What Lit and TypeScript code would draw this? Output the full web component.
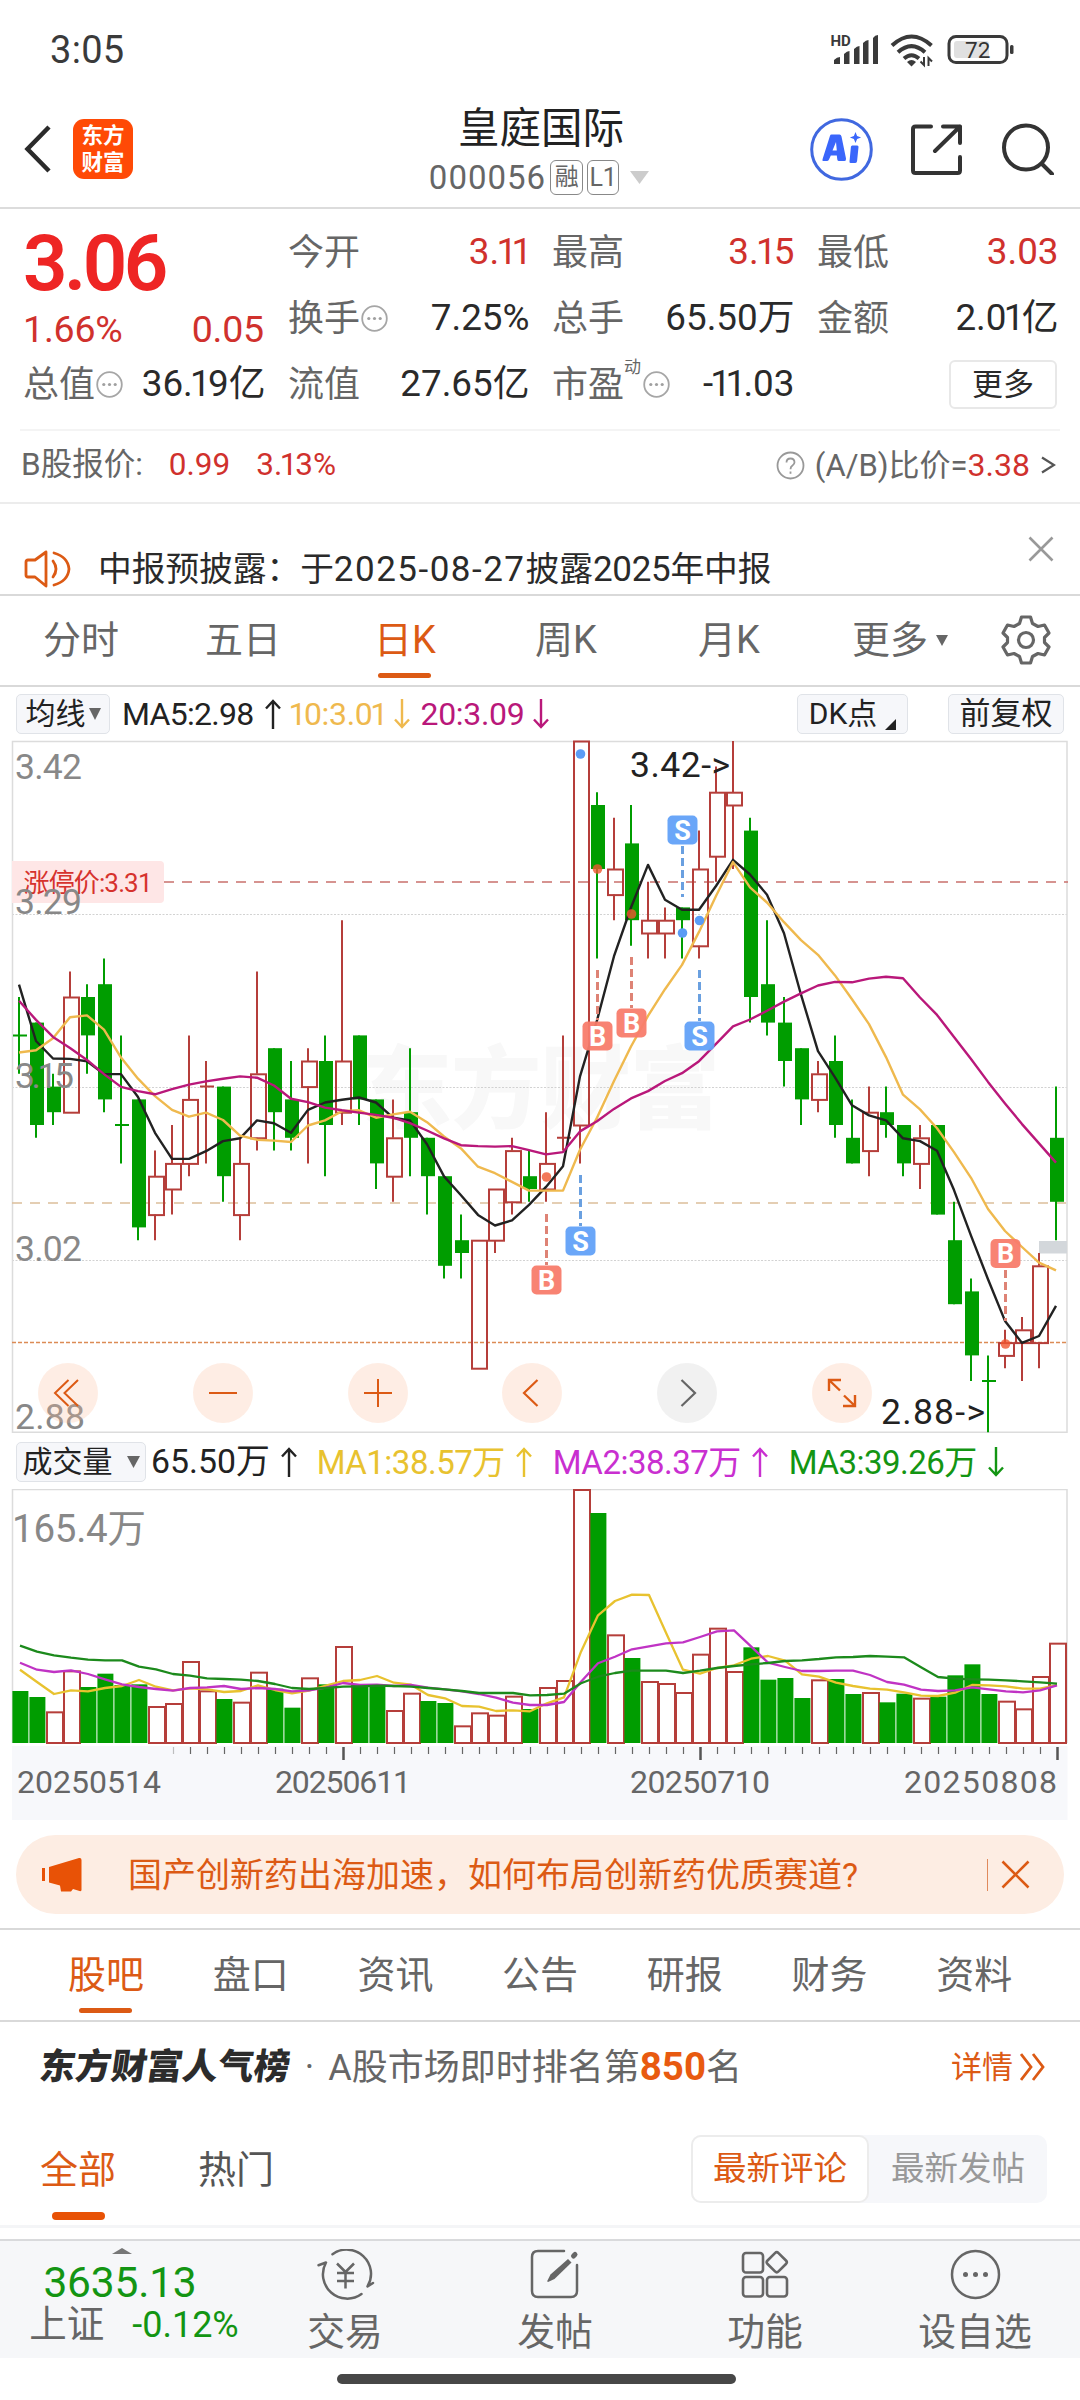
import { LitElement, html, svg, css, nothing } from "lit";
import { customElement, property } from "lit/decorators.js";

type Candle = [string, number, number, number, number];

const UP = "#b53e3a";
const DOWN = "#009d00";
const STEP = 17;

/* colour, high, body top, body bottom, low: ticks of 0.01 below 3.42 */
const CANDLES: Candle[] = [
  ["g", 20, 23, 23, 26], ["g", 22, 22, 30, 31], ["g", 26, 27, 29, 30], ["r", 18, 20, 29, 29],
  ["g", 19, 20, 23, 26], ["g", 17, 19, 28, 29], ["g", 23, 30, 30, 33], ["g", 28, 28, 38, 39],
  ["r", 32, 34, 37, 39], ["r", 30, 33, 35, 37], ["r", 23, 28, 33, 34], ["r", 25, 27, 27, 33],
  ["g", 27, 27, 34, 36], ["r", 31, 33, 37, 39], ["r", 18, 26, 31, 32], ["g", 24, 24, 29, 32],
  ["g", 25, 28, 31, 32], ["r", 24, 25, 27, 33], ["g", 23, 25, 30, 34], ["r", 14, 25, 29, 30],
  ["g", 23, 23, 28, 30], ["g", 28, 28, 33, 35], ["r", 28, 31, 34, 36], ["g", 24, 29, 31, 34],
  ["g", 31, 31, 34, 37], ["g", 34, 34, 41, 42], ["g", 37, 39, 40, 42], ["r", 39, 39, 49, 49],
  ["r", 35, 35, 39, 40], ["r", 31, 32, 36, 37], ["g", 32, 34, 35, 36], ["r", 29, 33, 35, 36],
  ["r", 23, 31, 31, 32], ["r", 0, 0, 30, 33], ["g", 4, 5, 10, 17], ["r", 6, 10, 12, 14],
  ["g", 5, 8, 14, 16], ["r", 11, 14, 15, 17], ["r", 13, 14, 15, 17], ["g", 13, 13, 14, 17],
  ["r", 7, 10, 16, 17], ["r", 2, 4, 9, 11], ["r", 0, 4, 5, 10], ["g", 6, 7, 20, 22],
  ["g", 14, 19, 22, 23], ["g", 20, 22, 25, 27], ["g", 24, 24, 28, 30], ["r", 25, 26, 28, 29],
  ["g", 23, 25, 30, 31], ["g", 28, 31, 33, 33], ["r", 27, 29, 32, 34], ["g", 27, 29, 30, 31],
  ["g", 30, 30, 33, 34], ["r", 30, 31, 33, 35], ["g", 30, 30, 37, 37], ["g", 36, 39, 44, 44],
  ["g", 42, 43, 48, 50], ["g", 48, 50, 50, 54], ["r", 46, 47, 48, 49], ["r", 45, 46, 47, 50],
  ["r", 40, 41, 47, 49], ["g", 27, 31, 36, 39],
];

/* moving averages, 27.9 units to a tick */
const MA5 = [555, 678, 716, 717, 722, 750, 750, 800, 878, 935, 935, 918, 896, 890, 851, 857, 878, 828, 812, 806, 801, 812, 845, 851, 903, 973, 1014, 1057, 1080, 1069, 1035, 996, 951, 755, 633, 493, 387, 294, 370, 392, 392, 340, 283, 315, 359, 443, 577, 700, 757, 818, 840, 851, 890, 896, 917, 1003, 1102, 1197, 1288, 1336, 1321, 1255];
const MA10 = [703, 698, 672, 626, 622, 653, 714, 760, 798, 828, 843, 834, 850, 884, 893, 895, 898, 862, 851, 831, 829, 845, 838, 832, 855, 886, 912, 952, 966, 985, 1004, 1004, 1004, 915, 845, 765, 690, 623, 565, 512, 440, 362, 288, 343, 376, 419, 458, 490, 535, 587, 641, 713, 795, 827, 868, 920, 976, 1044, 1092, 1127, 1161, 1178];
const MA20 = [590, 632, 669, 693, 719, 750, 778, 787, 794, 783, 773, 766, 760, 755, 758, 775, 804, 811, 823, 829, 834, 839, 845, 857, 873, 890, 905, 907, 908, 907, 916, 925, 920, 875, 853, 826, 803, 787, 765, 748, 722, 684, 646, 631, 612, 592, 574, 557, 549, 550, 542, 538, 541, 583, 621, 669, 717, 767, 814, 859, 901, 943];

/* volume bars and their averages, measured down from the panel in thirds of a pixel */
const VOL: [string, number][] = [
  ["g", 783], ["g", 801], ["r", 844], ["r", 721], ["g", 771], ["g", 731], ["g", 765], ["g", 763], ["r", 828], ["r", 819],
  ["r", 693], ["r", 781], ["g", 807], ["r", 815], ["r", 725], ["g", 776], ["g", 833], ["r", 742], ["g", 763], ["r", 648],
  ["g", 765], ["g", 766], ["r", 840], ["r", 788], ["g", 813], ["g", 819], ["r", 886], ["r", 847], ["r", 854], ["r", 797],
  ["g", 837], ["r", 771], ["r", 750], ["r", 177], ["g", 249], ["r", 613], ["g", 684], ["r", 753], ["r", 759], ["r", 786],
  ["r", 671], ["r", 593], ["r", 723], ["g", 652], ["g", 749], ["g", 744], ["g", 804], ["r", 748], ["g", 747], ["g", 792],
  ["r", 786], ["g", 817], ["g", 791], ["r", 803], ["g", 800], ["g", 736], ["g", 703], ["g", 792], ["r", 812], ["r", 835],
  ["r", 738], ["r", 638],
];
const VMA1 = [719, 756, 792, 781, 784, 774, 768, 750, 770, 781, 775, 778, 786, 783, 766, 780, 790, 782, 767, 753, 750, 738, 758, 764, 795, 805, 828, 830, 843, 841, 844, 820, 802, 665, 556, 513, 494, 495, 608, 719, 731, 714, 706, 686, 678, 692, 733, 740, 758, 768, 776, 779, 787, 797, 798, 788, 765, 766, 769, 776, 776, 765];
const VMA2 = [698, 719, 726, 721, 732, 748, 763, 771, 777, 782, 774, 772, 768, 777, 774, 777, 784, 781, 773, 759, 765, 764, 768, 765, 773, 778, 784, 792, 803, 818, 825, 825, 816, 755, 700, 680, 658, 649, 640, 637, 621, 604, 601, 649, 698, 711, 723, 723, 722, 722, 735, 756, 764, 779, 783, 781, 772, 778, 784, 787, 781, 766];
const VMA3 = [647, 665, 676, 683, 689, 691, 691, 710, 718, 732, 737, 745, 747, 749, 753, 762, 774, 777, 774, 770, 769, 767, 768, 770, 774, 778, 783, 789, 789, 789, 796, 795, 791, 760, 740, 729, 722, 722, 722, 729, 722, 714, 708, 703, 699, 693, 691, 687, 682, 681, 678, 680, 682, 712, 741, 746, 748, 749, 751, 754, 757, 761];

const priceY = (t: number) => 741 + t * 12.8;
const maY = (v: number) => 741 + ((v - 24) / 27.9) * 12.8;
const volY = (v: number) => 1430 + v / 3;
const line = (x0: number, data: number[], y: (v: number) => number) =>
  data.map((v, i) => `${x0 + i * STEP},${y(v).toFixed(1)}`).join(" ");

const arrow = (dir: string) => html`<svg class="arrow" width="16" height="30" viewBox="0 0 16 30" fill="none" stroke="currentColor" stroke-width="2.4">
  ${dir === "up" ? svg`<path d="M8 30V2M1 9.500L8 2l7 7.500"/>` : svg`<path d="M8 0v28M1 20.500L8 28l7-7.500"/>`}
</svg>`;
const dots = html`<svg class="dots" width="27" height="27" viewBox="0 0 27 27"><circle cx="13.500" cy="13.500" r="12.300" fill="none" stroke="#a6a6a6" stroke-width="1.800"/><g fill="#a0a0a0"><circle cx="7.800" cy="13.500" r="1.600"/><circle cx="13.500" cy="13.500" r="1.600"/><circle cx="19.200" cy="13.500" r="1.600"/></g></svg>`;

/* proportional figures: the digit 1 takes less room than the others */
const digits = (s: string) => s.split(/(1)/).map((p) => (p === "1" ? html`<span class="one">1</span>` : p));

const FONT = css`
  :host {
    font-family: Roboto, "Noto Sans CJK SC", sans-serif;
  }
  .one { margin: 0 -0.075em; }
`;

@customElement("price-chart")
class PriceChart extends LitElement {
  static styles = [FONT, css`
    :host { display: block; position: relative; height: 692px; }
    svg { display: block; overflow: visible; }
    .tools { position: absolute; left: 38px; top: 622px; display: flex; gap: 94.800px; }
    .tool { width: 60px; height: 60px; border-radius: 50%; background: rgba(251, 190, 155, 0.27); color: #dc5a14; display: flex; align-items: center; justify-content: center; }
    .tool.off { background: rgba(200, 200, 200, 0.25); color: #666; }
  `];

  candle([c, h, t, b, l]: Candle, i: number) {
    const x = 19 + i * STEP;
    const col = c === "g" ? DOWN : UP;
    if (t === b) {
      return svg`<path d=${`M${x} ${priceY(h)}V${priceY(l)}M${x - 6} ${priceY(t)}h14`} stroke=${col} stroke-width="2" fill="none"/>`;
    }
    if (c === "g") {
      return svg`<path d=${`M${x} ${priceY(h)}V${priceY(l)}`} stroke=${col} stroke-width="2"/>
        <rect x=${x - 6} y=${priceY(t)} width="14" height=${priceY(b) - priceY(t)} fill=${col}/>`;
    }
    return svg`<path d=${`M${x} ${priceY(h)}V${priceY(t)}M${x} ${priceY(b)}V${priceY(l)}`} stroke=${col} stroke-width="2"/>
      <rect x=${x - 6} y=${priceY(t) + 0.5} width="15" height=${priceY(b) - priceY(t)} fill="none" stroke=${col} stroke-width="2"/>`;
  }

  marker(kind: string, x: number, y: number, y1: number, y2: number, dotY: number) {
    const fill = kind === "B" ? "#f87c6c" : "#62a1f8";
    const dash = kind === "B" ? "#de8375" : "#6aa0e0";
    return svg`<path d=${`M${x} ${y1}V${y2}`} stroke=${dash} stroke-width="3" stroke-dasharray="8 4"/>
      <circle cx=${x} cy=${dotY} r="4.800" fill=${kind === "B" ? "#f0562f" : "#5b9cf5"} fill-opacity=${kind === "B" ? 0.8 : 1}/>
      <rect x=${x - 15} y=${y - 14.5} width="30" height="29" rx="5" fill=${fill} fill-opacity=".95"/>
      <text x=${x} y=${y + 9.5} text-anchor="middle" font-size="27" font-weight="700" fill="#fff">${kind}</text>`;
  }

  render() {
    return html`
      <svg width="1080" height="692" viewBox="0 741 1080 692" font-family='Roboto, "Noto Sans CJK SC", sans-serif'>
        <g font-size="90" font-weight="900" fill="#f8f8f8"><text x="362" y="1121" textLength="358">东方财富</text></g>
        <g stroke="#d2d2d2" stroke-width="1" stroke-dasharray="2 1.500">
          <path d="M12 914.500H1067M12 1087.500H1067M12 1260.500H1067"/>
        </g>
        <path d="M12.500 1433V741.500H1067V1432.300H12.500" fill="none" stroke="#dcdcdc" stroke-width="1.500"/>
        <path d="M164 882H1068" stroke="#c9706c" stroke-width="1.300" stroke-dasharray="10 8"/>
        <path d="M12 1203H1067" stroke="#dcbf9b" stroke-width="1.500" stroke-dasharray="10 8"/>
        <path d="M12 1342.500H1067" stroke="#dc8b55" stroke-width="1.500" stroke-dasharray="4 2"/>
        <rect x="1039" y="1241" width="28" height="12.500" fill="#d3d7db"/>
        ${CANDLES.map((c, i) => this.candle(c, i))}
        <path d="M12 861H160a4 4 0 0 1 4 4V899a4 4 0 0 1-4 4H12z" fill="#fee6e6"/>
        <text x="23.500" y="892" font-size="26" fill="#d6322d" textLength="129">涨停价:3.31</text>
        <g fill="none" stroke-width="2.400" stroke-linejoin="round">
          <polyline points=${line(19, MA5, maY)} stroke="#222"/>
          <polyline points=${line(19, MA10, maY)} stroke="#efb94e"/>
          <polyline points=${line(19, MA20, maY)} stroke="#b9187a"/>
        </g>
        ${this.marker("B", 597.5, 1036, 970, 1020, 869)}
        ${this.marker("B", 631.5, 1023, 957, 1008, 914)}
        ${this.marker("B", 546.5, 1280, 1214, 1265, 1177)}
        ${this.marker("B", 1005.5, 1253.5, 1270, 1321, 1344)}
        ${this.marker("S", 682.5, 830, 846, 897, 933)}
        ${this.marker("S", 699.5, 1036, 970, 1021, 920.5)}
        ${this.marker("S", 580.5, 1241, 1175, 1226, 754)}
        <g font-size="35.500" fill="#222">
          <text x="630" y="777" textLength="100">3.42-&gt;</text>
          <text x="881" y="1424" textLength="104">2.88-&gt;</text>
        </g>
        <g font-size="35.500" fill="#888">
          <text x="15" y="779" textLength="67">3.42</text>
          <text x="15" y="914" textLength="67">3.29</text>
          <text x="15" y="1088" textLength="59">3.15</text>
          <text x="15" y="1261" textLength="67">3.02</text>
          <text x="15" y="1428.500" textLength="70">2.88</text>
        </g>
      </svg>
      <div class="tools">
        <div class="tool"><svg width="30" height="30" viewBox="0 0 30 30" fill="none" stroke="currentColor" stroke-width="2"><path d="M15.500 2L2 15l13.500 13M25 2L11.500 15 25 28"/></svg></div>
        <div class="tool"><svg width="30" height="30" viewBox="0 0 30 30" fill="none" stroke="currentColor" stroke-width="2"><path d="M1 15h28"/></svg></div>
        <div class="tool"><svg width="30" height="30" viewBox="0 0 30 30" fill="none" stroke="currentColor" stroke-width="2"><path d="M1 15h28M15 1v28"/></svg></div>
        <div class="tool"><svg width="30" height="30" viewBox="0 0 30 30" fill="none" stroke="currentColor" stroke-width="2.200"><path d="M20.500 2L7 15l13.500 13"/></svg></div>
        <div class="tool off"><svg width="30" height="30" viewBox="0 0 30 30" fill="none" stroke="currentColor" stroke-width="2.200"><path d="M9.500 2L23 15 9.500 28"/></svg></div>
        <div class="tool"><svg width="30" height="30" viewBox="0 0 30 30" fill="none" stroke="currentColor" stroke-width="2.400"><path d="M2 13V2h12M2 2l11 10.500M28 17v11H16M28 28L17 17.500"/></svg></div>
      </div>`;
  }
}

@customElement("volume-chart")
class VolumeChart extends LitElement {
  static styles = [FONT, css`
    :host { display: block; height: 331px; }
    svg { display: block; }
  `];

  render() {
    return html`
      <svg width="1080" height="331" viewBox="0 1489 1080 331" font-family='Roboto, "Noto Sans CJK SC", sans-serif'>
        <rect x="12" y="1746" width="1055.500" height="74" fill="#f7f8fb"/>
        <path d="M12.500 1743V1489.500H1067V1743" fill="none" stroke="#dcdcdc" stroke-width="1.500"/>
        <text x="12" y="1542" font-size="38.500" fill="#888" textLength="134">165.4万</text>
        ${VOL.map(([c, v], i) => {
          const x = 20 + i * STEP;
          const y = volY(v);
          return c === "g"
            ? svg`<rect x=${x - 7.6} y=${y} width="16" height=${1743 - y} fill=${DOWN}/>`
            : svg`<rect x=${x - 7} y=${y + 1} width="16" height=${1742 - y} fill="#fff" stroke=${UP} stroke-width="2"/>`;
        })}
        <g fill="none" stroke-width="2.300" stroke-linejoin="round">
          <polyline points=${line(20, VMA1, volY)} stroke="#e8c22f"/>
          <polyline points=${line(20, VMA2, volY)} stroke="#c033c4"/>
          <polyline points=${line(20, VMA3, volY)} stroke="#1c8a1c"/>
        </g>
        ${VOL.map((_, i) => i < 9 ? nothing : i % 21 === 19 || i === 61
          ? svg`<path d=${`M${20.5 + i * STEP} 1747v13`} stroke="#555" stroke-width="2.500"/>`
          : svg`<path d=${`M${20.5 + i * STEP} 1747v7`} stroke="#666" stroke-width="1.200" stroke-opacity=${i === 9 ? 0.4 : 1}/>`)}
        <g font-size="32" fill="#666">
          <text x="17" y="1793" textLength="144">20250514</text>
          <text x="275" y="1793" textLength="136">20250611</text>
          <text x="630" y="1793" textLength="140">20250710</text>
          <text x="904" y="1793" textLength="153">20250808</text>
        </g>
      </svg>`;
  }
}

@customElement("quote-item")
class QuoteItem extends LitElement {
  @property() label = "";
  @property() value = "";
  @property() sup = "";
  @property({ type: Boolean }) info = false;
  @property({ type: Boolean }) red = false;

  static styles = [FONT, css`
    :host { display: flex; align-items: center; justify-content: space-between; height: 66px; font-size: 36px; line-height: 1; white-space: nowrap; color: #2a2a2a; }
    .label { display: flex; align-items: center; color: #666; margin-top: 1px; }
    .value { font-size: 36.800px; margin-right: -1.500px; margin-top: 1px; }
    .red { color: #d0312d; }
    .sup { font-size: 17px; align-self: flex-start; margin-top: -8px; }
    .dots { margin-left: 1px; }
    .sup + .dots { margin-left: 2px; }
  `];

  render() {
    return html`
      <span class="label">${this.label}${this.sup ? html`<span class="sup">${this.sup}</span>` : nothing}${this.info ? dots : nothing}</span>
      <span class=${this.red ? "value red" : "value"}>${digits(this.value)}</span>`;
  }
}

@customElement("app-root")
class AppRoot extends LitElement {
  static styles = [FONT, css`
    :host { display: flex; flex-direction: column; width: 1080px; height: 2400px; overflow: hidden; background: #fff; color: #222; line-height: 1; white-space: nowrap; }
    svg { display: block; flex: none; }
    div, span { box-sizing: border-box; }
    .status { display: flex; align-items: center; justify-content: space-between; height: 100px; padding: 0 66px 0 50px; color: #3a3a3a; font-size: 38px; letter-spacing: 0.300px; }
    .header { display: flex; align-items: center; height: 109px; padding: 0 26px 9px 24px; border-bottom: 2px solid #dcdcdc; }
    .logo { display: grid; place-content: center; width: 60px; height: 60px; margin-left: 22px; border-radius: 11px; background: #ff4a06; color: #fff; font-size: 21.500px; font-weight: 700; line-height: 27px; }
    .name { display: flex; flex-direction: column; align-items: center; width: 400px; height: 98px; margin-left: 208px; padding-top: 1px; }
    .name .title { font-size: 41.500px; line-height: 50px; padding-top: 3px; }
    .code { display: flex; align-items: center; height: 52px; margin-top: 2px; gap: 4px; font-size: 33px; letter-spacing: 1px; color: #666; margin-left: -4px; }
    .badge { display: grid; place-content: center; width: 32px; height: 35px; border: 1.500px solid #888; border-radius: 6px; font-size: 25px; letter-spacing: 0; }
    .badge.cjk { font-size: 24px; width: 33px; }
    .code svg { margin-left: 7px; }
    .actions { display: flex; align-items: center; margin-left: auto; }
    .share { margin-left: 38px; }
    .search { margin-left: 40px; }

    .quote { display: grid; grid-template-columns: 241px 240px 241px 240px; column-gap: 24px; padding: 10px 23px 0 23px; height: 220px; }
    .price { height: 88px; line-height: 90px; font-size: 78px; font-weight: 600; letter-spacing: -3.500px; color: #ee2524; }
    .change { display: flex; justify-content: space-between; align-items: center; height: 46px; margin-bottom: -2px; font-size: 37.500px; letter-spacing: -0.200px; color: #d0312d; }
    .more { display: flex; justify-content: flex-end; height: 66px; align-items: center; }
    .more span { display: grid; place-content: center; width: 108px; height: 49px; border: 2px solid #e8e8e8; border-radius: 6px; font-size: 31px; color: #2a2a2a; }
    .rule { height: 2px; margin: 0 20px; background: #f4f4f4; }
    .bshare { display: flex; align-items: center; height: 73px; padding: 0 24px 3px 21px; border-bottom: 2px solid #ececec; font-size: 31.500px; color: #666; }
    .red { color: #d0312d; }
    .bshare .b1 { margin-left: 26px; }
    .bshare .b2 { margin-left: 26px; }
    .bshare .ratio { display: flex; align-items: center; margin-left: auto; font-size: 31px; }
    .ratio svg { margin-right: 10px; }
    .ratio svg:last-child { margin: 0 0 0 11px; }
    .ratio .red { font-size: 32px; }
    .notice { display: flex; align-items: center; height: 92px; padding: 44px 26px 4px 24px; border-bottom: 2px solid #d9d9d9; font-size: 33.700px; color: #2a2a2a; }
    .notice .horn { margin-right: 27px; }
    .notice .num { font-size: 35px; letter-spacing: -0.300px; }
    .notice .date { letter-spacing: 1.500px; }
    .notice .close { margin: -40px 0 0 auto; }

    .tabs { display: grid; height: 91px; padding-top: 11px; border-bottom: 2px solid #d9d9d9; font-size: 38px; color: #666; }
    .period { grid-template-columns: 162px 169px 161px 163px 154px 149px 1fr; padding-left: 43px; }
    .period .bar { margin-left: 4px; }
    .section { grid-template-columns: repeat(7, 144.700px); padding-left: 68px; padding-top: 12px; height: 92px; }
    .tab { display: flex; flex-direction: column; align-items: flex-start; line-height: 66px; }
    .tab.on { color: #dc5a14; }
    .bar { width: 53px; height: 5px; border-radius: 3px; background: #dc5a14; }
    .section .bar { margin-left: 11px; }
    .more-tab { flex-direction: row; align-items: center; height: 66px; gap: 8px; }
    .gear { margin-top: 8px; }

    .chips { display: flex; align-items: center; height: 54px; padding: 0 16px 1px 16px; font-size: 32px; }
    .chip { display: flex; align-items: center; justify-content: center; height: 40px; border: 1.500px solid #e0e3e8; border-radius: 5px; background: #f6f7fa; color: #222; font-size: 30px; }
    .c-avg { width: 94px; gap: 3px; margin-right: 12px; }
    .c-dk { width: 111px; margin-left: auto; gap: 8px; }
    .c-dk svg { margin-top: 22px; }
    .c-adj { width: 116px; margin-left: 40px; font-size: 31px; }
    .t5 { width: 133px; letter-spacing: -0.700px; }
    .y, .m { display: flex; align-items: center; }
    .y { color: #efb94e; }
    .m { color: #b9187a; }
    .chips .arrow { margin: 0 10px 0 10px; }
    .chips .m .arrow { margin-left: 9px; }
    .chips .y .arrow { margin-left: 9px; }
    .y i, .m i { font-style: normal; letter-spacing: -0.300px; }
    .vol { height: 56px; padding: 2px 16px 0; font-size: 33px; }
    .c-vol { width: 130px; gap: 14px; margin-right: 5px; }
    .vol .seg { display: flex; align-items: center; letter-spacing: -0.500px; }
    .vol .seg .arrow { margin: 0 21px 0 11px; }
    .vol .s0 { font-size: 33.800px; letter-spacing: 0; }
    .vol .s0 .arrow { margin: 0 20px 0 11px; }

    .promo { display: flex; align-items: center; height: 79px; margin: 15px 16px 14px; padding: 0 34px 0 25px; border-radius: 40px; background: #fdede3; color: #dc5a14; font-size: 34px; }
    .promo .txt { margin-left: 46px; padding-top: 1px; }
    .promo .sep { width: 1.500px; height: 32px; margin-left: auto; margin-right: 13px; background: #e08a5c; }
    .line { height: 2px; background: #d9d9d9; flex: none; }
    .rank { display: flex; align-items: center; height: 90px; padding: 0 35px 0 40px; font-size: 36px; color: #666; }
    .rank .ttl { font-size: 35.700px; font-weight: 900; transform: skewX(-8deg); color: #2c2c2c; padding-top: 2px; }
    .rank .dot { margin: 0 14px 0 15px; }
    .rank b { color: #e85a10; font-size: 38.500px; font-weight: 700; line-height: 36px; }
    .detail { display: flex; align-items: center; gap: 7px; margin-left: auto; color: #dc5a14; font-size: 31px; }
    .feed { display: flex; height: 113px; padding: 25px 33px 0 40px; font-size: 38px; color: #555; }
    .feed .tab.on .bar { margin: 9px 0 0 12px; height: 8px; border-radius: 4px; background: #e85206; }
    .feed .hot { margin-left: 82px; }
    .switch { display: grid; grid-template-columns: 178px 178px; width: 356px; height: 68px; margin: -2px 0 0 auto; border-radius: 10px; background: #f6f7fa; color: #999; font-size: 33.500px; }
    .switch span { display: grid; place-content: center; }
    .switch .sel { border: 2px solid #ececec; border-radius: 10px; background: #fff; color: #dc5a14; }
    .strip { height: 3px; margin-bottom: 11px; background: #f4f5f7; flex: none; }
    .dock { display: flex; height: 119px; border-top: 2px solid #d9dadc; background: #f6f7f9; color: #666; flex: none; }
    .index { display: flex; flex-direction: column; align-items: center; width: 240px; padding-top: 7px; }
    .index .val { font-size: 42.500px; line-height: 44px; margin-top: 7px; letter-spacing: -0.200px; color: #139513; }
    .index .row { display: flex; align-items: center; gap: 28px; height: 40px; font-size: 37.500px; margin-left: 28px; }
    .index .pct { color: #139513; font-size: 36px; }
    .index .tri { margin-left: 3px; }
    .entry { display: flex; flex-direction: column; align-items: center; width: 210px; padding-top: 8px; font-size: 37.800px; gap: 14px; }
    .entry svg { height: 51px; }
    .home { width: 399px; height: 10px; margin: 16px 0 0 337px; border-radius: 5px; background: #474747; flex: none; }
  `];

  render() {
    return html`
      <div class="status">
        <span>3:05</span>
        <svg width="184" height="36" viewBox="830 32 184 36" font-family="Roboto, sans-serif" letter-spacing="0">
          <text x="830.500" y="46" font-size="15" font-weight="700" fill="#3a3a3a">HD</text>
          <path d="M834 64v-4q3-3 6-3v7zM844 64V54q3-3 5.500-3v13zM854 64V49q3-3 5.500-3v18zM863 64V43q3-3 5.500-3v24zM873 64V38q2-3 5-3v29z" fill="#3a3a3a"/>
          <g fill="none" stroke="#3a3a3a" stroke-width="4"><path d="M892 45.500Q911.500 27.500 931.500 45.500"/><path d="M898 52.300Q911.500 40 925 52.300"/><path d="M904 58.500Q911.500 52 919 58.500"/></g>
          <path d="M907 62q4.500-4 9 0l-4.500 4.500z" fill="#3a3a3a"/>
          <path d="M924 57v8l-3.500-3.500M928.500 66v-8l3.500 3.500" fill="none" stroke="#3a3a3a" stroke-width="2"/>
          <rect x="949" y="36.500" width="58" height="26" rx="7" fill="none" stroke="#3a3a3a" stroke-width="3"/>
          <rect x="954" y="41" width="35" height="17" rx="3" fill="#e0e0e0"/>
          <rect x="1010" y="45" width="3.500" height="9" rx="1.500" fill="#3a3a3a"/>
          <text x="965" y="57.500" font-size="22.500" fill="#333">72</text>
        </svg>
      </div>
      <div class="header">
        <svg width="27" height="48" viewBox="0 0 27 48" fill="none" stroke="#2b2b2b" stroke-width="4.500"><path d="M25 2L3.500 24 25 46"/></svg>
        <div class="logo"><span>东方</span><span>财富</span></div>
        <div class="name">
          <span class="title">皇庭国际</span>
          <div class="code"><span>000056</span><span class="badge cjk">融</span><span class="badge">L1</span><svg width="19" height="13" viewBox="0 0 19 13"><path d="M0 0h19L9.500 13z" fill="#ccc"/></svg></div>
        </div>
        <div class="actions">
          <svg width="63" height="63" viewBox="0 0 63 63"><circle cx="31.500" cy="31.500" r="29.800" fill="none" stroke="#4068e0" stroke-width="3"/><path fill="#3a66fb" fill-rule="evenodd" d="M21.500 16.500h8q1.500 0 2 2l4.500 22q.300 2.500-1.500 2.500h-5.500q-1.500 0-1.700-1.500l-.500-4h-6l-1.800 4q-.700 1.500-2.200 1.500h-3.600q-1.500 0-.500-2.200L20 17.800q.300-1.300 1.500-1.300zM26 24l-3.500 8.500h4.300z M42.200 27.500h5q1.500 0 1.300 1.500l-1.400 14q-.200 2-1.800 2h-4.500q-1.500 0-1.300-1.500l1.400-14.500q.200-1.500 1.300-1.500z M45.500 14l1.600 3.900 4 1.600-4 1.600-1.600 3.900-1.600-3.900-4-1.600 4-1.600z"/></svg>
          <svg class="share" width="51" height="51" viewBox="0 0 51 51" fill="none" stroke="#333" stroke-width="4" stroke-linecap="round" stroke-linejoin="round"><path d="M20 2.500H4.500Q2 2.500 2 5v41.500Q2 49 4.500 49h42q2.500 0 2.500-2.500V33M32 2.500h17V19M49 2.500L24 27"/></svg>
          <svg class="search" width="52" height="52" viewBox="0 0 52 52" fill="none" stroke="#333" stroke-width="4" stroke-linecap="round"><circle cx="24" cy="24.500" r="22"/><path d="M40 41l10 10"/></svg>
        </div>
      </div>

      <div class="quote">
        <div>
          <div class="price">3.06</div>
          <div class="change"><span>1.66%</span><span>0.05</span></div>
          <quote-item label="总值" value="36.19亿" info></quote-item>
        </div>
        <div>
          <quote-item label="今开" value="3.11" red></quote-item>
          <quote-item label="换手" value="7.25%" info></quote-item>
          <quote-item label="流值" value="27.65亿"></quote-item>
        </div>
        <div>
          <quote-item label="最高" value="3.15" red></quote-item>
          <quote-item label="总手" value="65.50万"></quote-item>
          <quote-item label="市盈" sup="动" value="-11.03" info></quote-item>
        </div>
        <div>
          <quote-item label="最低" value="3.03" red></quote-item>
          <quote-item label="金额" value="2.01亿"></quote-item>
          <div class="more"><span>更多</span></div>
        </div>
      </div>
      <div class="rule"></div>
      <div class="bshare">
        <span>B股报价:</span><span class="red b1">0.99</span><span class="red b2">${digits("3.13%")}</span>
        <div class="ratio">
          <svg width="29" height="29" viewBox="0 0 29 29" fill="none" stroke="#999" stroke-width="1.800"><circle cx="14.500" cy="14.500" r="13"/><path d="M10.500 11.500q0-4 4-4t4 3.800q0 2-2 3.200t-2 3.700"/><path d="M14.500 20.500v2.300"/></svg>
          <span>(A/B)比价=</span><span class="red">3.38</span>
          <svg width="15" height="18" viewBox="0 0 15 18" fill="none" stroke="#555" stroke-width="2.300"><path d="M1 1.500L13 9 1 16.500"/></svg>
        </div>
      </div>
      <div class="notice">
        <svg class="horn" width="47" height="38" viewBox="0 0 47 38" fill="none" stroke="#dc5a14" stroke-width="2.800" stroke-linejoin="round" stroke-linecap="round"><path d="M22 2L11 10H4Q2 10 2 12v13q0 2 2 2h7l11 9z"/><path d="M29 11q6 8 0 16M30 3q14 4 15 16-1 12-15 16"/></svg>
        <span>中报预披露：于<span class="num date">2025-08-27</span>披露<span class="num">2025</span>年中报</span>
        <svg class="close" width="26" height="26" viewBox="0 0 26 26" stroke="#999" stroke-width="2.600"><path d="M1.500 1.500l23 23M24.500 1.500l-23 23"/></svg>
      </div>
      <div class="tabs period">
        <div class="tab">分时</div>
        <div class="tab">五日</div>
        <div class="tab on">日K<span class="bar"></span></div>
        <div class="tab">周K</div>
        <div class="tab">月K</div>
        <div class="tab more-tab">更多<svg width="12" height="11" viewBox="0 0 12 11"><path d="M0 0h12L6 11z" fill="#666"/></svg></div>
        <svg class="gear" width="50" height="50" viewBox="0 0 50 50" fill="none" stroke="#666" stroke-width="3.200" stroke-linejoin="round"><path d="M20.500 2h9l2 6.500 5.500 3 6.500-1.500 4.500 8-4.500 4.500v5l4.500 4.500-4.500 8-6.500-1.500-5.500 3-2 6.500h-9l-2-6.500-5.500-3-6.500 1.500-4.500-8L6.500 27.500v-5L2 18l4.500-8 6.500 1.500 5.500-3z"/><circle cx="25" cy="25" r="7.500"/></svg>
      </div>
      <div class="chips">
        <span class="chip c-avg">均线<svg width="12" height="12" viewBox="0 0 12 12"><path d="M0 0h12L6 12z" fill="#666"/></svg></span>
        <span class="t5">MA5:2.98</span>${arrow("up")}
        <span class="y"><i>${digits("10:3.01")}</i>${arrow("down")}</span>
        <span class="m"><i>20:3.09</i>${arrow("down")}</span>
        <span class="chip c-dk">DK点<svg width="11" height="11" viewBox="0 0 11 11"><path d="M11 0v11H0z" fill="#222"/></svg></span>
        <span class="chip c-adj">前复权</span>
      </div>
      <price-chart></price-chart>
      <div class="chips vol">
        <span class="chip c-vol">成交量<svg width="13" height="12" viewBox="0 0 13 12"><path d="M0 0h13L6.500 12z" fill="#666"/></svg></span>
        <span class="seg s0">65.50万${arrow("up")}</span>
        <span class="seg" style="color:#e8c22f">MA1:38.57万${arrow("up")}</span>
        <span class="seg" style="color:#c92fd0">MA2:38.37万${arrow("up")}</span>
        <span class="seg" style="color:#139513">MA3:39.26万${arrow("down")}</span>
      </div>
      <volume-chart></volume-chart>

      <div class="promo">
        <svg width="41" height="35" viewBox="0 0 41 35" fill="#e85206"><path d="M1 11h3v13H1zM8 10L38 1q2.500-.500 2.500 2v30q0 1.500-2 1l-6.500-2-2 2.500H20l-1-6-11-3z"/></svg>
        <span class="txt">国产创新药出海加速，如何布局创新药优质赛道?</span>
        <span class="sep"></span>
        <svg width="29" height="29" viewBox="0 0 29 29" stroke="#dc5a14" stroke-width="2.600"><path d="M1.500 1.500l26 26M27.500 1.500l-26 26"/></svg>
      </div>
      <div class="line"></div>
      <div class="tabs section">
        <div class="tab on">股吧<span class="bar"></span></div>
        ${["盘口", "资讯", "公告", "研报", "财务", "资料"].map((t) => html`<div class="tab">${t}</div>`)}
      </div>
      <div class="rank">
        <span class="ttl">东方财富人气榜</span><span class="dot">·</span>
        <span>A股市场即时排名第<b>850</b>名</span>
        <span class="detail">详情<svg width="25" height="28" viewBox="0 0 25 28" fill="none" stroke="currentColor" stroke-width="2.800"><path d="M1 1l10 13L1 27M13 1l10 13-10 13"/></svg></span>
      </div>
      <div class="feed">
        <div class="tab on">全部<span class="bar"></span></div>
        <div class="tab hot">热门</div>
        <div class="switch"><span class="sel">最新评论</span><span>最新发帖</span></div>
      </div>
      <div class="strip"></div>
      <div class="dock">
        <div class="index">
          <svg class="tri" width="20" height="6" viewBox="0 0 20 6"><path d="M0 6h20L10 0z" fill="#777"/></svg>
          <span class="val">3635.13</span>
          <div class="row"><span>上证</span><span class="pct">-0.12%</span></div>
        </div>
        <div class="entry">
          <svg width="60" viewBox="0 0 60 51" fill="none" stroke="#666" stroke-width="2.500" stroke-linecap="round" stroke-linejoin="round"><path d="M17.500 5.200A24.300 24.300 0 0 1 52.500 37.500L58 34M46.500 45A24.300 24.300 0 0 1 11 13.500L3.500 16.200"/><path d="M22 14.500l8.500 8.500 8.500-8.500M22 24h17M22 32h17M30.500 23.500v16" stroke-linecap="butt"/></svg>
          <span>交易</span>
        </div>
        <div class="entry">
          <svg width="50" viewBox="0 0 50 51" fill="none" stroke="#666" stroke-width="2.500" stroke-linecap="round"><path d="M34 2H8Q2 2 2 8v34q0 6 6 6h33q6 0 6-6V16"/><path d="M38 10l3.500 3.500-17 16.500-6.500 3q-1 0-.500-1.500l3-6z" fill="#666" stroke="none"/><path d="M43.500 7l1.500-1.500" stroke-width="5"/></svg>
          <span>发帖</span>
        </div>
        <div class="entry">
          <svg width="48" viewBox="0 0 48 51" fill="none" stroke="#666" stroke-width="2.600"><rect x="2" y="4" width="20" height="19.500" rx="3"/><rect x="2" y="28" width="20" height="19.500" rx="3"/><rect x="26" y="28" width="20" height="19.500" rx="3"/><rect x="28" y="5.500" width="15.500" height="15.500" rx="2.500" transform="rotate(45 35.750 13.250)"/></svg>
          <span>功能</span>
        </div>
        <div class="entry">
          <svg width="51" viewBox="0 0 51 51"><circle cx="25.500" cy="25.500" r="23.500" fill="none" stroke="#666" stroke-width="2.500"/><g fill="#666"><circle cx="15.500" cy="25.500" r="2.500"/><circle cx="25.500" cy="25.500" r="2.500"/><circle cx="35.500" cy="25.500" r="2.500"/></g></svg>
          <span>设自选</span>
        </div>
      </div>
      <div class="home"></div>
    `;
  }
}
